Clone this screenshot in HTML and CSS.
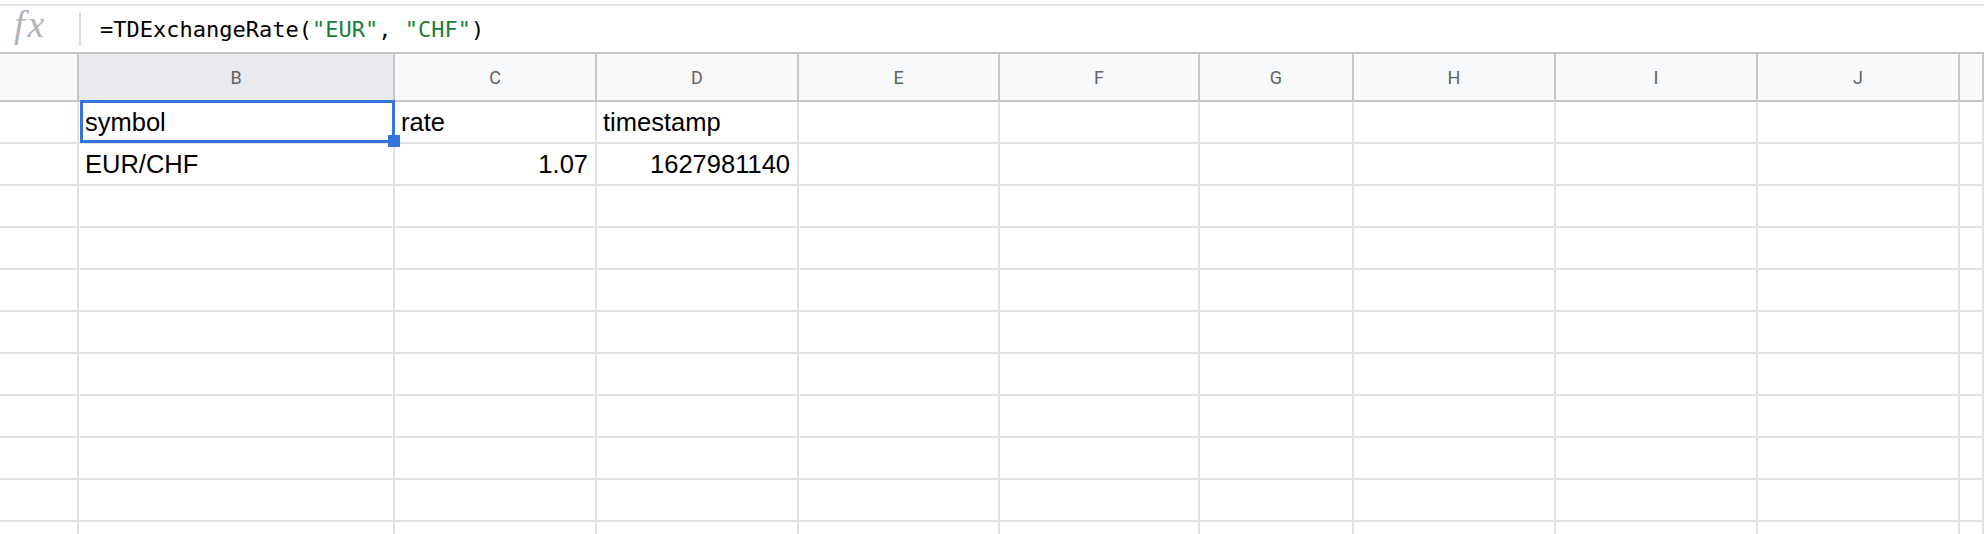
FILE: index.html
```html
<!DOCTYPE html>
<html>
    <head>
        <link rel="stylesheet" href="styles.css">
    </head>
    <body>
        <div class="formula-bar">
            <span class="fx">fx</span>
            <span class="divider"></span>
            <code class="formula">=TDExchangeRate(<span class="str">"EUR"</span>, <span class="str">"CHF"</span>)</code>
        </div>

        <div class="sheet">
            <div class="row head">
                <div class="cell"></div>
                <div class="cell selected">B</div>
                <div class="cell">C</div>
                <div class="cell">D</div>
                <div class="cell">E</div>
                <div class="cell">F</div>
                <div class="cell">G</div>
                <div class="cell">H</div>
                <div class="cell">I</div>
                <div class="cell">J</div>
                <div class="cell"></div>
            </div>
            <div class="row">
                <div class="cell"></div>
                <div class="cell active">symbol</div>
                <div class="cell">rate</div>
                <div class="cell">timestamp</div>
                <div class="cell"></div><div class="cell"></div><div class="cell"></div><div class="cell"></div><div class="cell"></div><div class="cell"></div><div class="cell"></div>
            </div>
            <div class="row">
                <div class="cell"></div>
                <div class="cell">EUR/CHF</div>
                <div class="cell num">1.07</div>
                <div class="cell num">1627981140</div>
                <div class="cell"></div><div class="cell"></div><div class="cell"></div><div class="cell"></div><div class="cell"></div><div class="cell"></div><div class="cell"></div>
            </div>
            <div class="row">
                <div class="cell"></div><div class="cell"></div><div class="cell"></div><div class="cell"></div><div class="cell"></div><div class="cell"></div><div class="cell"></div><div class="cell"></div><div class="cell"></div><div class="cell"></div><div class="cell"></div>
            </div>
            <div class="row">
                <div class="cell"></div><div class="cell"></div><div class="cell"></div><div class="cell"></div><div class="cell"></div><div class="cell"></div><div class="cell"></div><div class="cell"></div><div class="cell"></div><div class="cell"></div><div class="cell"></div>
            </div>
            <div class="row">
                <div class="cell"></div><div class="cell"></div><div class="cell"></div><div class="cell"></div><div class="cell"></div><div class="cell"></div><div class="cell"></div><div class="cell"></div><div class="cell"></div><div class="cell"></div><div class="cell"></div>
            </div>
            <div class="row">
                <div class="cell"></div><div class="cell"></div><div class="cell"></div><div class="cell"></div><div class="cell"></div><div class="cell"></div><div class="cell"></div><div class="cell"></div><div class="cell"></div><div class="cell"></div><div class="cell"></div>
            </div>
            <div class="row">
                <div class="cell"></div><div class="cell"></div><div class="cell"></div><div class="cell"></div><div class="cell"></div><div class="cell"></div><div class="cell"></div><div class="cell"></div><div class="cell"></div><div class="cell"></div><div class="cell"></div>
            </div>
            <div class="row">
                <div class="cell"></div><div class="cell"></div><div class="cell"></div><div class="cell"></div><div class="cell"></div><div class="cell"></div><div class="cell"></div><div class="cell"></div><div class="cell"></div><div class="cell"></div><div class="cell"></div>
            </div>
            <div class="row">
                <div class="cell"></div><div class="cell"></div><div class="cell"></div><div class="cell"></div><div class="cell"></div><div class="cell"></div><div class="cell"></div><div class="cell"></div><div class="cell"></div><div class="cell"></div><div class="cell"></div>
            </div>
            <div class="row">
                <div class="cell"></div><div class="cell"></div><div class="cell"></div><div class="cell"></div><div class="cell"></div><div class="cell"></div><div class="cell"></div><div class="cell"></div><div class="cell"></div><div class="cell"></div><div class="cell"></div>
            </div>
            <div class="row">
                <div class="cell"></div><div class="cell"></div><div class="cell"></div><div class="cell"></div><div class="cell"></div><div class="cell"></div><div class="cell"></div><div class="cell"></div><div class="cell"></div><div class="cell"></div><div class="cell"></div>
            </div>
        </div>
    </body>
</html>
```

FILE: styles.css
```css
body {
    margin: 0;
    overflow: hidden;
    background: #fff;
    font-family: "Liberation Sans", Arial, sans-serif;
    color: #000;
}
.formula-bar {
    display: flex;
    align-items: center;
    height: 46px;
    margin-top: 4px;
    border-top: 2px solid #e1e3e6;
}
.fx {
    box-sizing: border-box;
    width: 79px;
    padding-left: 14px;
    padding-bottom: 10px;
    font-family: "Liberation Serif", serif;
    font-style: italic;
    font-size: 38px;
    letter-spacing: 3px;
    color: #b0b4b8;
}
.divider {
    width: 2px;
    height: 33px;
    background: #dadce0;
}
.formula {
    margin-left: 19px;
    font-family: "DejaVu Sans Mono", monospace;
    font-size: 22px;
    white-space: pre;
}
.formula .str {
    color: #188038;
}

.row {
    display: grid;
    grid-template-columns: 79px 316px 202px 202px 201px 200px 154px 202px 202px 202px 1fr;
}
.cell {
    box-sizing: border-box;
    height: 42px;
    display: flex;
    align-items: flex-end;
    padding: 0 7px 5px 6px;
    border-right: 2px solid #e2e2e2;
    border-bottom: 2px solid #e2e2e2;
    font-size: 25.5px;
    line-height: 29px;
    white-space: nowrap;
}
.cell.num {
    justify-content: flex-end;
}
.head .cell {
    height: 50px;
    padding: 0;
    align-items: center;
    justify-content: center;
    background: #f8f9fa;
    border-top: 2px solid #c4c6c8;
    border-right-color: #c4c6c8;
    border-bottom-color: #c4c6c8;
    font-family: Roboto, sans-serif;
    font-size: 18px;
    line-height: normal;
    color: #5f6368;
}
.head .cell.selected {
    background: #e8eaed;
}
.cell.active {
    position: relative;
}
.cell.active::after {
    content: "";
    position: absolute;
    top: -2px;
    left: 1px;
    right: -2px;
    bottom: -1px;
    box-sizing: border-box;
    border: 3px solid #3574dc;
}
.cell.active::before {
    content: "";
    position: absolute;
    right: -7px;
    bottom: -5px;
    width: 12px;
    height: 12px;
    background: #3574dc;
    z-index: 1;
}
```
